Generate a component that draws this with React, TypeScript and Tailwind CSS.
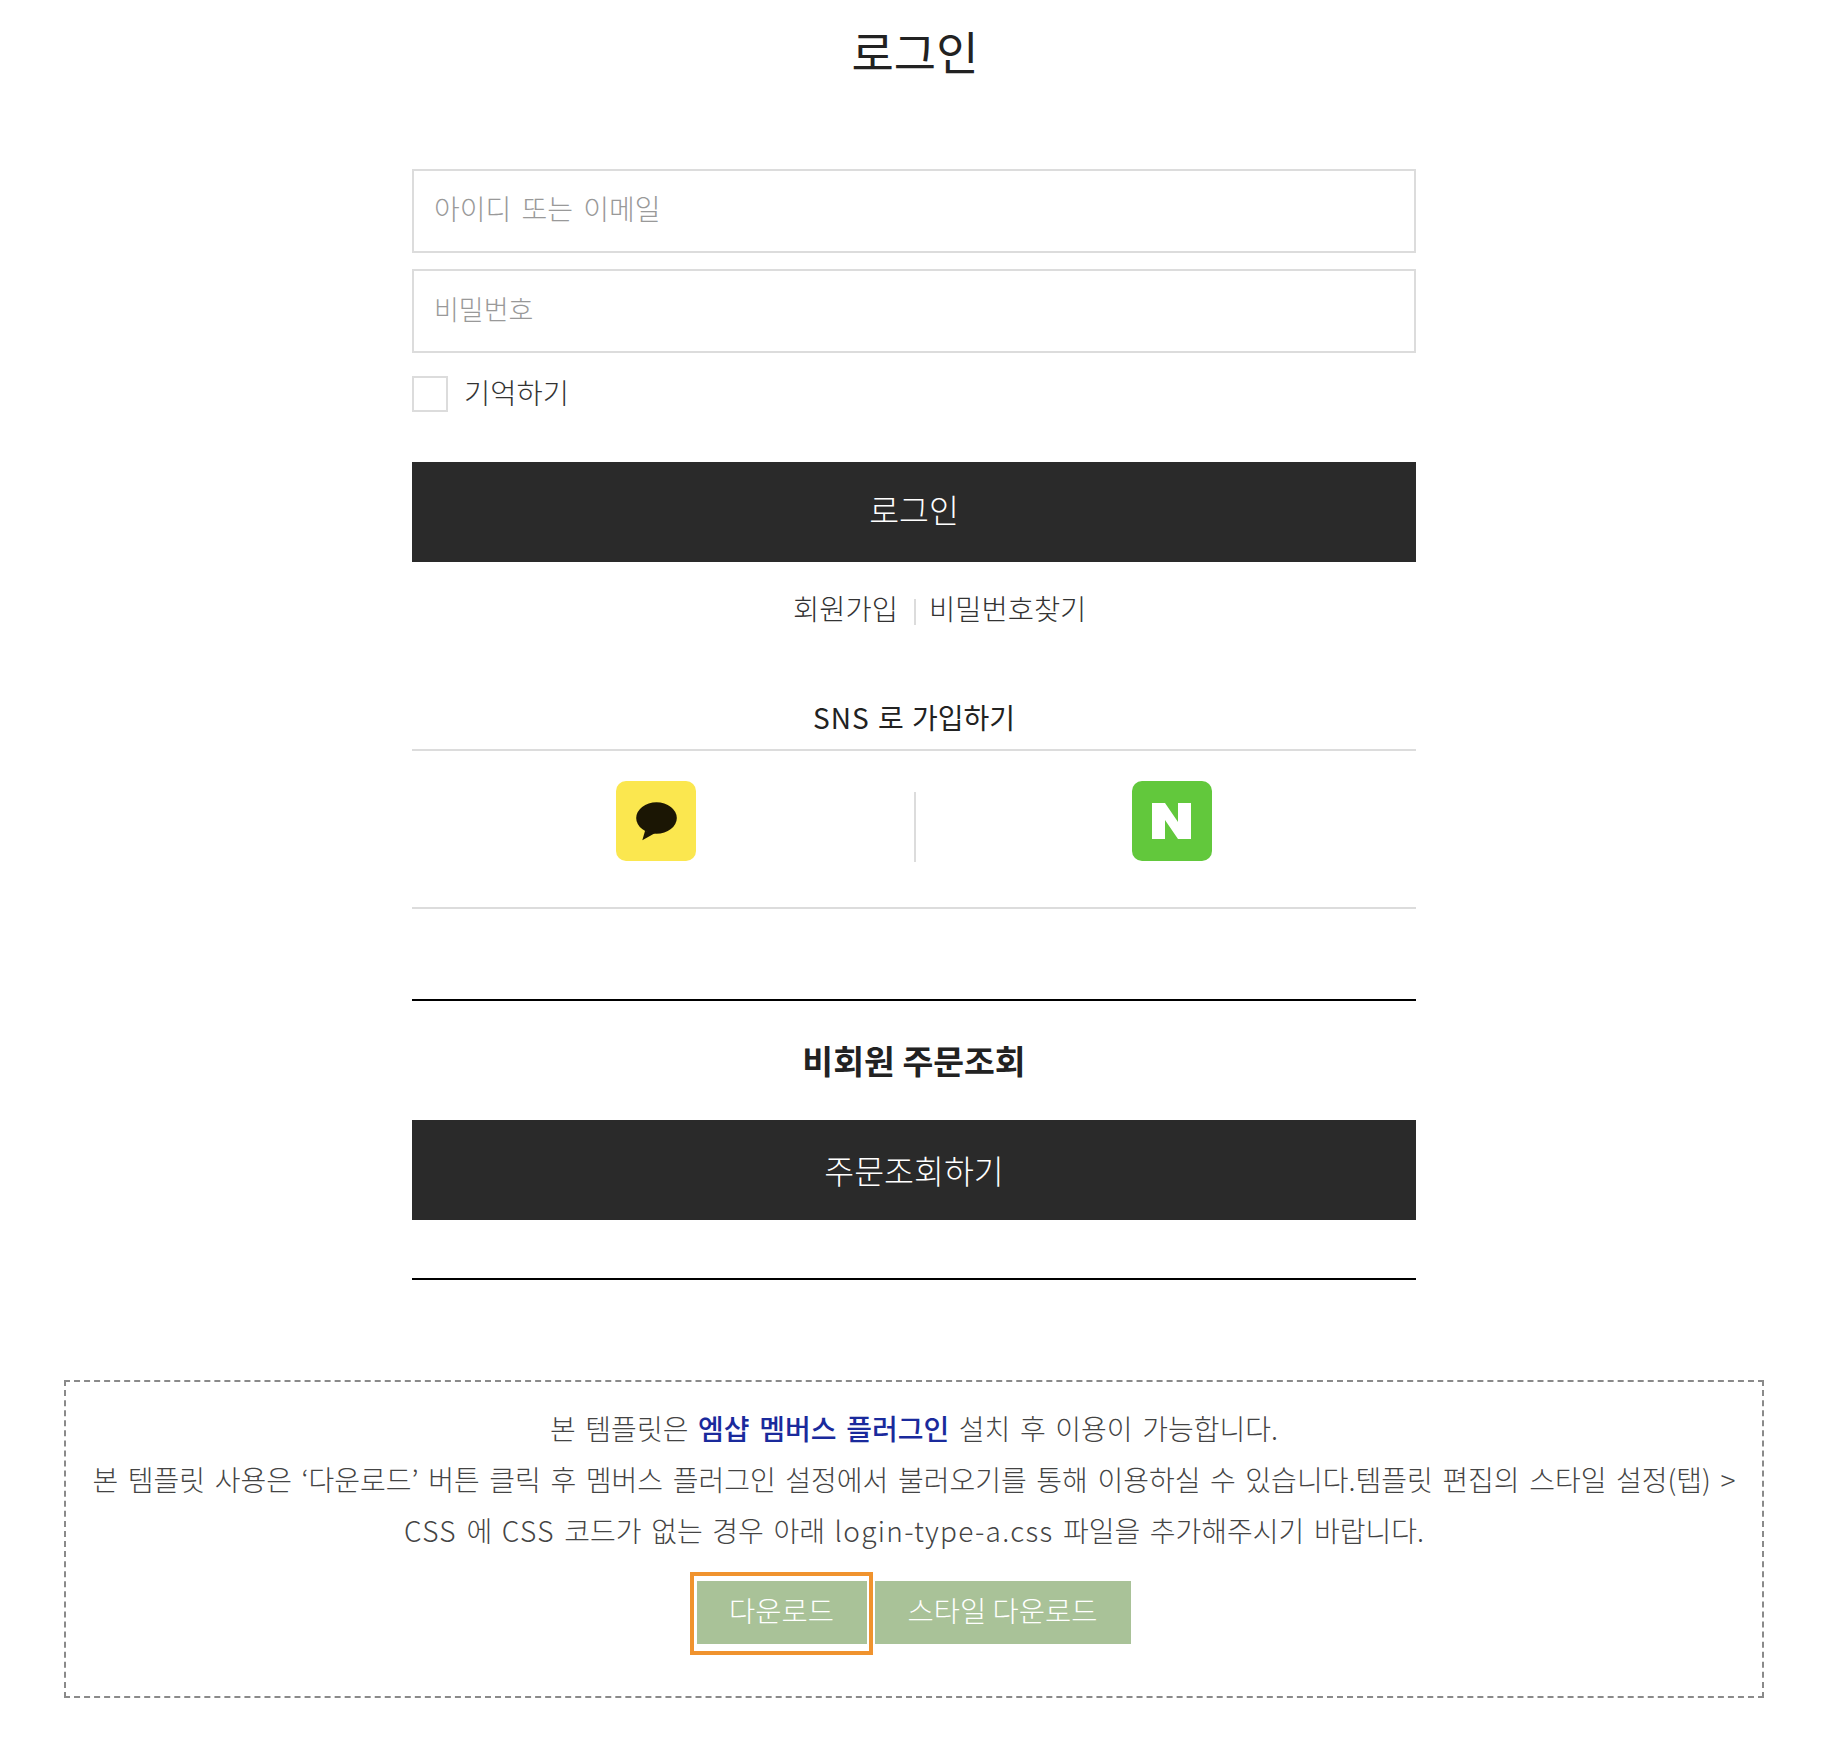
const font = "font-['Noto_Sans_CJK_KR','Noto_Sans',sans-serif]"

function KakaoIcon() {
  return (
    <svg viewBox="0 0 80 80" className="w-20 h-20 block">
      <rect width="80" height="80" rx="10" fill="#fbe74f" />
      <ellipse cx="40.5" cy="37" rx="20.3" ry="15.7" fill="#1b1604" />
      <path d="M29 50 L26.3 59.3 L41 51 Z" fill="#1b1604" />
    </svg>
  )
}

function NaverIcon() {
  return (
    <svg viewBox="0 0 80 80" className="w-20 h-20 block">
      <rect width="80" height="80" rx="10" fill="#62c83c" />
      <path d="M20 22 H33 L46 41 V22 H59 V58 H46 L33 39 V58 H20 Z" fill="#ffffff" />
    </svg>
  )
}

export default function App() {
  return (
    <div className={`w-[1830px] bg-white pb-10 ${font} font-light`}>
      <h1 className="h-[104px] pt-[19px] text-center text-[46px] leading-[62px] font-normal text-[#222]">로그인</h1>

      <div className="w-[1004px] ml-[412px] pt-[65px]">
        <input
          placeholder="아이디 또는 이메일"
          className="block w-full h-[84px] border-2 border-[#dcdcdc] px-[20px] pb-[6px] text-[28px] [word-spacing:4px] outline-none placeholder:text-[#999]"
        />
        <input
          placeholder="비밀번호"
          className="block w-full h-[84px] mt-[16px] border-2 border-[#dcdcdc] px-[20px] pb-[6px] text-[27px] outline-none placeholder:text-[#999]"
        />

        <label className="flex items-center mt-[23px] h-[36px]">
          <span className="w-[36px] h-[36px] border-2 border-[#dcdcdc] bg-white" />
          <span className="ml-[16px] text-[28.5px] leading-[36px] text-[#333] -mt-[4px]">기억하기</span>
        </label>

        <button className="block w-full h-[100px] mt-[50px] bg-[#2a2a2a] text-white text-[32.5px] pb-[6px] font-light">로그인</button>

        <div className="flex items-center h-[40px] mt-[26px] text-[28.5px] text-[#333]">
          <span className="w-[486px] text-right">회원가입</span>
          <span className="w-[2px] h-[26px] ml-[16px] mr-[13px] mt-[8px] bg-[#dcdcdc]" />
          <span className="flex-1">비밀번호찾기</span>
        </div>

        <p className="mt-[69px] h-[40px] text-center text-[28px] leading-[40px] [word-spacing:2px] font-normal text-[#222]">
          <span className="tracking-[1px]">SNS</span> 로 가입하기
        </p>
        <div className="mt-[12px] h-[160px] border-y-2 border-[#dcdcdc] flex pt-[30px]">
          <div className="w-[502px] flex justify-center pr-[15px]">
            <KakaoIcon />
          </div>
          <div className="w-[2px] h-[70px] mt-[11px] bg-[#dcdcdc]" />
          <div className="flex-1 flex justify-center pl-[11px]">
            <NaverIcon />
          </div>
        </div>

        <div className="mt-[90px] h-[281px] border-y-2 border-black">
          <h2 className="mt-[39px] h-[40px] text-center text-[33.5px] leading-[40px] font-bold text-[#222]">비회원 주문조회</h2>
          <button className="block w-full h-[100px] mt-[40px] bg-[#2a2a2a] text-white text-[32.5px] font-light">주문조회하기</button>
        </div>
      </div>

      <div className="w-[1700px] h-[318px] ml-[64px] mt-[100px] border-2 border-dashed border-[#8a8a8a] pt-[21px] text-center text-[28px] leading-[51px] [word-spacing:3.4px] text-[#444]">
        <p>
          본 템플릿은 <a className="font-medium text-[#1a2a9c]">엠샵 멤버스 플러그인</a> 설치 후 이용이 가능합니다.
        </p>
        <p>본 템플릿 사용은 ‘다운로드’ 버튼 클릭 후 멤버스 플러그인 설정에서 불러오기를 통해 이용하실 수 있습니다.템플릿 편집의 스타일 설정(탭) &gt;</p>
        <p>
          <span className="tracking-[1.3px]">CSS</span> 에 <span className="tracking-[1.3px]">CSS</span> 코드가 없는 경우 아래{' '}
          <span className="tracking-[1.3px]">login-type-a.css</span> 파일을 추가해주시기 바랍니다.
        </p>
        <div className="flex justify-center items-start mt-[25px] pr-[8px]">
          <span className="flex border-[4px] border-[#f0932e] pt-[5px] pb-[7px] pl-[3px] pr-[2px] -mt-[9px]">
            <button className="w-[170px] h-[63px] bg-[#a9c298] text-white text-[28.5px] pb-[6px] font-light">다운로드</button>
          </span>
          <button className="w-[256px] h-[63px] ml-[2px] bg-[#a9c298] text-white text-[28.5px] pb-[6px] font-light">스타일 다운로드</button>
        </div>
      </div>
    </div>
  )
}
